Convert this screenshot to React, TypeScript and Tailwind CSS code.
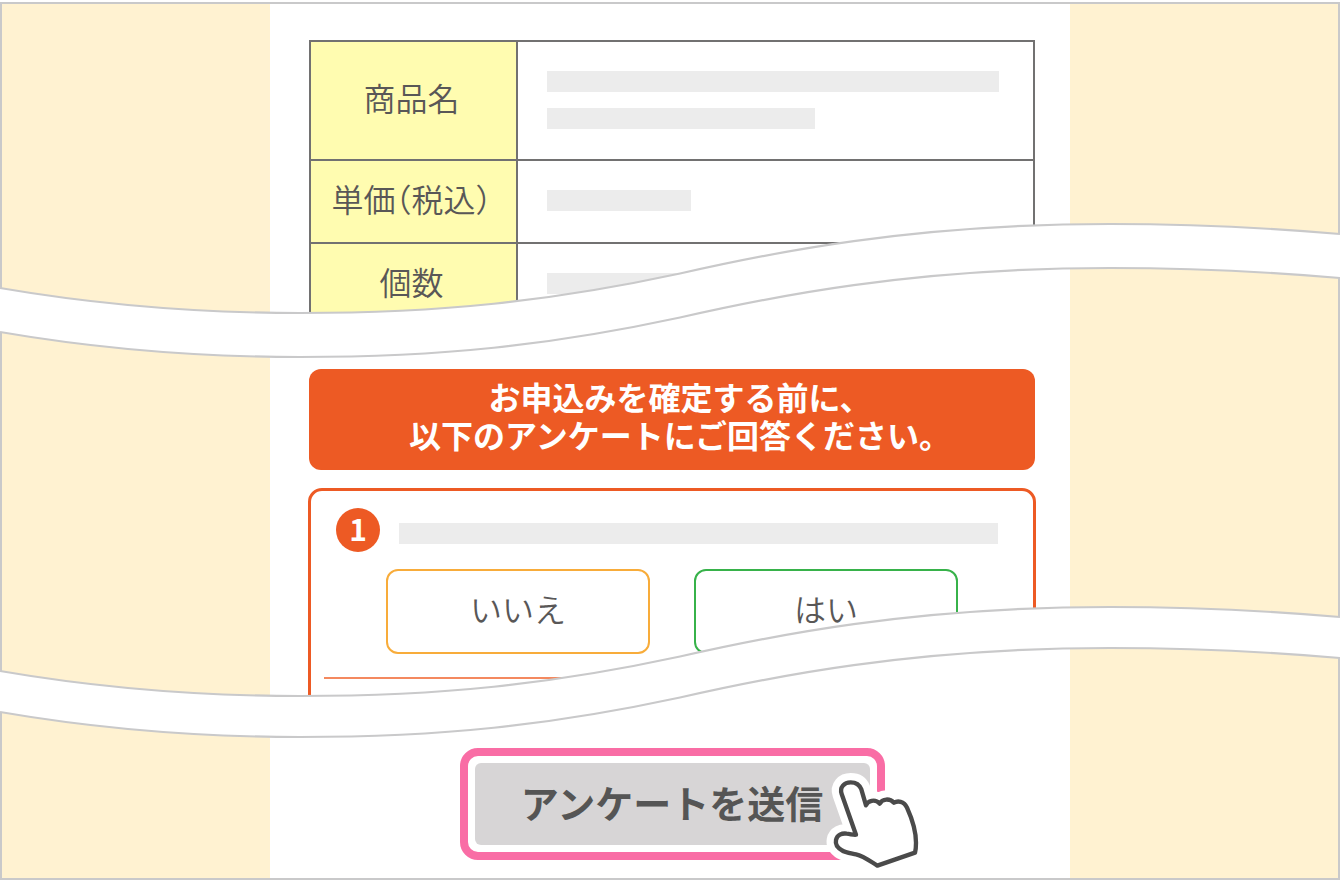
import type { ReactNode } from "react";

interface ProductRow {
  label: string;
  bars: string[];
  height: string;
}

const productRows: ProductRow[] = [
  { label: "商品名", bars: ["w-[452px]", "w-[268px]"], height: "h-[119px]" },
  { label: "単価（税込）", bars: ["w-[144px]"], height: "h-[83px]" },
  { label: "個数", bars: ["w-[144px]"], height: "h-[83px]" },
];

function Bar({ className }: { className: string }) {
  return <div className={`h-[21px] max-w-full bg-[#ececec] ${className}`} />;
}

function ProductTable() {
  return (
    <table className="mx-px w-[calc(100%-2px)] table-fixed border-collapse border-2 border-[#727171]">
      <tbody>
        {productRows.map((row) => (
          <tr key={row.label} className={row.height}>
            <th
              scope="row"
              className="w-[207px] border-2 border-[#727171] bg-[#fffcb0] pr-1 pb-2 text-center text-[32px] leading-10 font-[350] whitespace-nowrap text-[#595757] [font-feature-settings:'halt']"
            >
              {row.label}
            </th>
            <td className="border-2 border-[#727171] pr-[34px] pb-0.5 pl-[29px]">
              <div className="flex flex-col gap-4">
                {row.bars.map((bar, index) => (
                  <Bar key={index} className={bar} />
                ))}
              </div>
            </td>
          </tr>
        ))}
      </tbody>
    </table>
  );
}

const WAVE_TOP = "C90 83.5 190 93 300 93 C440 93 550 81.5 680 53.5 C770 33 910 4 1110 4 C1200 4 1270 8 1340 14";

// White strip that cuts the page; the main column below it is hidden too
function Wave({ gap, className }: { gap: number; className: string }) {
  return (
    <svg
      aria-hidden="true"
      viewBox="0 0 1340 140"
      preserveAspectRatio="none"
      className={`pointer-events-none absolute inset-x-0 h-[140px] w-full ${className}`}
    >
      <path d={`M270 93 H300 C440 93 550 81.5 680 53.5 C770 33 910 4 1070 5 V${93 + gap} H270 Z`} fill="#fff" />
      <path
        d={`M0 68 ${WAVE_TOP}`}
        transform={`translate(0 ${gap / 2})`}
        fill="none"
        stroke="#fff"
        strokeWidth={gap}
        strokeLinecap="square"
      />
      <path d={`M0 68 ${WAVE_TOP}`} fill="none" stroke="#c9c9ca" strokeWidth="2.2" />
      <path d={`M0 68 ${WAVE_TOP}`} transform={`translate(0 ${gap})`} fill="none" stroke="#c9c9ca" strokeWidth="2.2" />
    </svg>
  );
}

function AnswerButton({ children, className }: { children: ReactNode; className: string }) {
  return (
    <button
      type="button"
      className={`h-[85px] w-[264px] rounded-xl border-2 bg-white pb-2 text-[32px] leading-10 font-[350] text-[#595757] ${className}`}
    >
      {children}
    </button>
  );
}

function HandPointer() {
  const hand =
    "M168 314 L125 192 C118 171 133 157 152 157 C168 157 179 165 184 178 L198 226 C203 213 225 205 239 221 C247 205 270 205 282 218 C292 212 312 212 321 233 C340 275 348 310 348 338 C348 352 347 360 345 368 L232 407 C205 390 190 378 168 373 C150 369 135 367 126 361 C110 352 106 340 108 330 C111 315 126 309 140 311 C152 312 160 315 168 314 Z";
  return (
    <svg
      aria-hidden="true"
      viewBox="78 126 282 294"
      className="pointer-events-none absolute top-6 -right-[35px] h-[98px] w-[94px] overflow-visible"
    >
      <path d={hand} fill="#fff" stroke="#fff" strokeWidth="56" strokeLinejoin="round" />
      <path d={hand} fill="#fff" stroke="#4a4a4a" strokeWidth="13" strokeLinejoin="round" />
    </svg>
  );
}

export default function App() {
  return (
    <div className="relative grid grid-cols-[27fr_80fr_27fr] overflow-hidden bg-white pt-0.5 font-['Noto_Sans_CJK_JP',sans-serif]">
      <div className="border-y-2 border-l-2 border-[#c9c9ca] bg-[#fff2d1]" />

      <main className="border-y-2 border-[#c9c9ca] bg-white pt-9 pr-[34px] pb-[18px] pl-[38px]">
        <ProductTable />

        <h2 className="mx-px mt-[42px] rounded-xl bg-[#ed5a24] pt-2 pb-[17px] text-center text-[32px] leading-[38px] font-bold text-white [font-feature-settings:'halt']">
          お申込みを確定する前に、
          <br />
          以下のアンケートにご回答ください。
        </h2>

        <section className="mt-[18px] rounded-[14px] border-3 border-[#ed5a24] pt-[17px] pb-9">
          <div className="flex items-center gap-[19px] pr-[35px] pl-[25px]">
            <span className="flex size-11 shrink-0 items-center justify-center rounded-full bg-[#ed5a24] pb-1 text-[30px] leading-none font-bold text-white">
              1
            </span>
            <Bar className="mt-1.5 w-full" />
          </div>
          <div className="mt-[17px] flex gap-11 pl-[75px]">
            <AnswerButton className="border-[#f8ac3a]">いいえ</AnswerButton>
            <AnswerButton className="border-[#37b24a]">はい</AnswerButton>
          </div>
          <hr className="mx-[13px] mt-[23px] border-t-2 border-[#f4895f]" />
        </section>

        <div className="relative mx-auto mt-[30px] w-[425px]">
          <div className="rounded-[18px] border-8 border-[#f96da5] bg-white p-[7px]">
            <button
              type="submit"
              className="h-[82px] w-full rounded-md bg-[#d7d5d6] pb-1 text-[38px] leading-[48px] font-bold text-[#555]"
            >
              アンケートを送信
            </button>
          </div>
          <HandPointer />
        </div>
      </main>

      <div className="border-y-2 border-r-2 border-[#c9c9ca] bg-[#fff2d1]" />

      <Wave gap={44} className="top-[220px]" />
      <Wave gap={41} className="top-[603px]" />
    </div>
  );
}
